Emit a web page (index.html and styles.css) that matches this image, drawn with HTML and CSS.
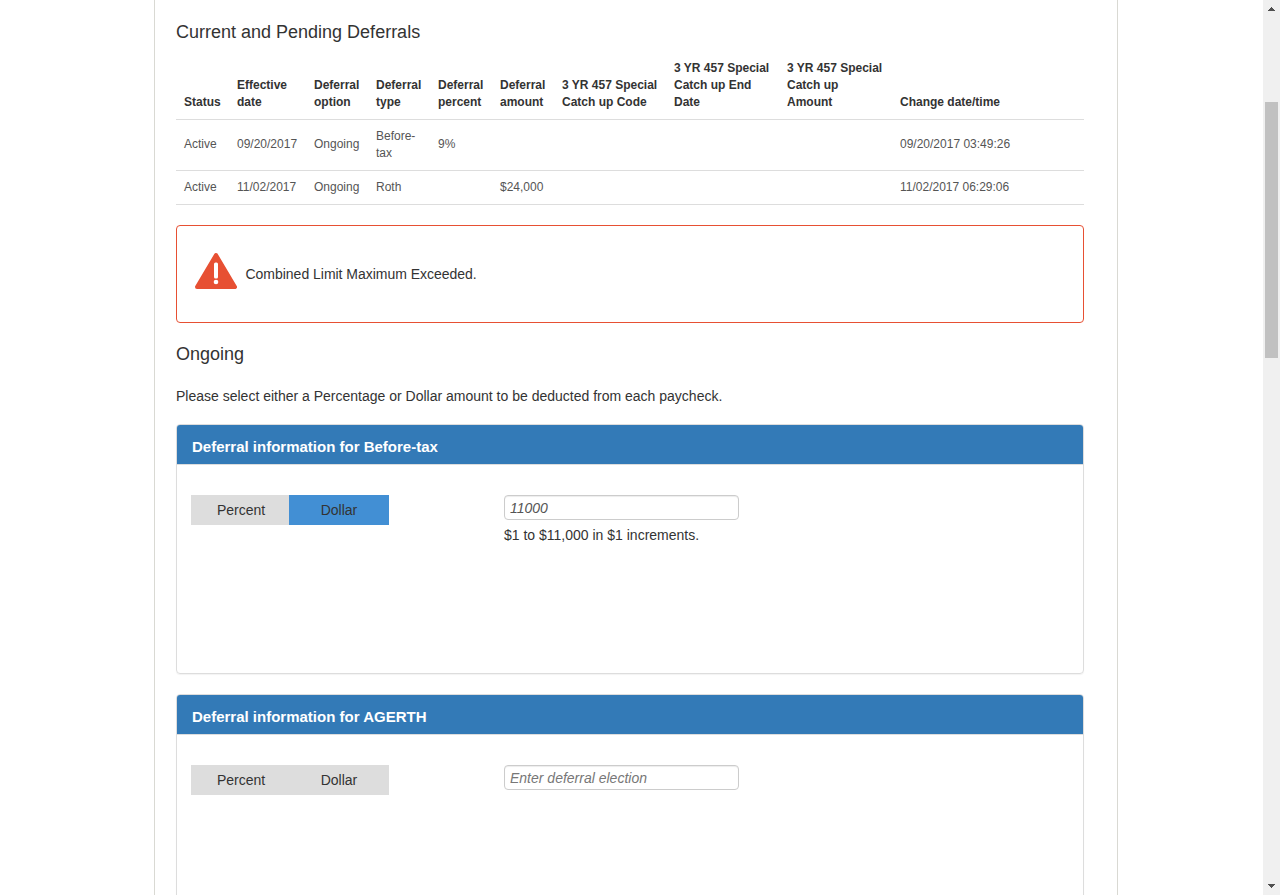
FILE: index.html
```html
<!DOCTYPE html>
<html lang="en">
<head>
<meta charset="utf-8">
<title>Deferrals</title>
<link rel="stylesheet" href="styles.css">
</head>
<body>
<div class="window">
  <main class="sheet">
    <h2 class="heading">Current and Pending Deferrals</h2>
    <table class="deferrals">
      <colgroup><col class="c53"><col class="c77"><col class="c62"><col class="c62"><col class="c62"><col class="c62"><col class="c112"><col class="c113"><col class="c113"><col></colgroup>
      <thead>
        <tr><th>Status</th><th>Effective<br>date</th><th>Deferral<br>option</th><th>Deferral<br>type</th><th>Deferral<br>percent</th><th>Deferral<br>amount</th><th>3 YR 457 Special<br>Catch up Code</th><th>3 YR 457 Special<br>Catch up End<br>Date</th><th>3 YR 457 Special<br>Catch up<br>Amount</th><th>Change date/time</th></tr>
      </thead>
      <tbody>
        <tr class="tall"><td>Active</td><td>09/20/2017</td><td>Ongoing</td><td class="wrapped">Before-<br>tax</td><td>9%</td><td></td><td></td><td></td><td></td><td>09/20/2017 03:49:26</td></tr>
        <tr><td>Active</td><td>11/02/2017</td><td>Ongoing</td><td>Roth</td><td></td><td>$24,000</td><td></td><td></td><td></td><td>11/02/2017 06:29:06</td></tr>
      </tbody>
    </table>
    <div class="alert">
      <svg class="alert-icon" width="44" height="38" viewBox="0 0 44 38">
        <path d="M22 3 L41 35 H3 Z" fill="#e75033" stroke="#e75033" stroke-width="4" stroke-linejoin="round"/>
        <rect x="20" y="10.500" width="4" height="16" rx="1.500" fill="#fff"/>
        <circle cx="22" cy="30" r="2.300" fill="#fff"/>
      </svg>
      <span class="alert-text">Combined Limit Maximum Exceeded.</span>
    </div>
    <h2 class="heading">Ongoing</h2>
    <p class="intro">Please select either a Percentage or Dollar amount to be deducted from each paycheck.</p>
    <section class="panel">
      <h3 class="panel-title">Deferral information for Before-tax</h3>
      <div class="panel-body">
        <div class="toggle"><button class="option">Percent</button><button class="option dollar selected">Dollar</button></div>
        <div class="entry">
          <input class="amount" type="text" value="11000">
          <div class="help">$1 to $11,000 in $1 increments.</div>
        </div>
      </div>
    </section>
    <section class="panel">
      <h3 class="panel-title">Deferral information for AGERTH</h3>
      <div class="panel-body">
        <div class="toggle"><button class="option">Percent</button><button class="option dollar">Dollar</button></div>
        <div class="entry">
          <input class="amount" type="text" placeholder="Enter deferral election">
        </div>
      </div>
    </section>
  </main>
  <div class="scrollbar">
    <svg class="arrow" width="17" height="17" viewBox="0 0 17 17" shape-rendering="crispEdges"><path d="M8 7h1v1h1v1h1v1h1v1H5v-1h1V9h1V8h1z" fill="#505050"/></svg>
    <div class="track"><div class="thumb"></div></div>
    <svg class="arrow" width="17" height="17" viewBox="0 0 17 17" shape-rendering="crispEdges"><path d="M5 6h7v1h-1v1h-1v1H9v1H8V9H7V8H6V7H5z" fill="#505050"/></svg>
  </div>
</div>
</body>
</html>
```

FILE: styles.css
```css
* { box-sizing: border-box; }
body {
  margin: 0;
  overflow: hidden;
  background: #fff;
  color: #333;
  font: 14px/20px "Liberation Sans", Arial, sans-serif;
}
.window { display: flex; height: 895px; overflow: hidden; }
.sheet {
  width: 964px;
  height: 895px;
  margin-left: 154px;
  padding: 22px 33px 0 21px;
  border: solid #d9d9d3;
  border-width: 0 1px;
  overflow: hidden;
}
.heading { margin: 0; font-size: 18px; line-height: 20px; font-weight: 400; }
.deferrals {
  width: 908px;
  margin-top: 10px;
  border-collapse: separate;
  border-spacing: 0;
  table-layout: fixed;
  font-size: 12px;
  line-height: 17px;
}
.c53 { width: 53px; }
.c77 { width: 77px; }
.c62 { width: 62px; }
.c112 { width: 112px; }
.c113 { width: 113px; }
.deferrals th, .deferrals td {
  padding: 8px;
  border-bottom: 1px solid #ddd;
  text-align: left;
  white-space: nowrap;
}
.deferrals th { vertical-align: bottom; }
.deferrals td { vertical-align: middle; color: #555; }
.deferrals .tall td:not(.wrapped) { padding: 7px 8px 9px; }
.alert {
  display: flex;
  align-items: center;
  height: 98px;
  margin-top: 20px;
  padding-left: 17px;
  border: 1px solid #e75033;
  border-radius: 4px;
}
.alert-icon { margin: -6px 7.5px 0 0; }
.alert-text { letter-spacing: -0.02px; }
.alert + .heading { margin-top: 21px; }
.intro { margin: 22px 0 18px; }
.panel {
  height: 250px;
  margin-bottom: 20px;
  border: 1px solid #ddd;
  border-radius: 4px;
  box-shadow: 0 1px 1px rgba(0, 0, 0, .05);
}
.panel-title {
  height: 40px;
  margin: 0;
  padding: 12px 15px 0;
  border-bottom: 1px solid #ddd;
  border-radius: 3px 3px 0 0;
  background: #337ab7;
  color: #fff;
  font-size: 15px;
  line-height: 20px;
}
.panel-body { display: flex; gap: 115px; padding: 30px 14px; align-items: flex-start; }
.toggle { display: flex; }
.option {
  width: 98px;
  height: 30px;
  padding: 0 0 0 2px;
  border: 0;
  background: #ddd;
  color: #333;
  font: inherit;
}
.dollar { width: 100px; padding: 0; }
.selected { background: #428fd4; }
.entry { width: 235px; }
.amount {
  display: block;
  width: 235px;
  height: 25px;
  padding: 0 5px;
  border: 1px solid #ccc;
  border-radius: 4px;
  background: #fff;
  box-shadow: inset 0 1px 1px rgba(0, 0, 0, .075);
  color: #555;
  font: italic 14px/20px "Liberation Sans", Arial, sans-serif;
}
.amount::placeholder { color: #777; opacity: 1; }
.help { margin-top: 5px; white-space: nowrap; }
.scrollbar {
  display: flex;
  flex-direction: column;
  width: 17px;
  height: 895px;
  margin-left: auto;
  background: #f0f0f0;
}
.track { flex: 1; padding: 85px 2px 0; }
.thumb { width: 13px; height: 256px; background: #c1c1c1; }
.arrow { display: block; }
```
